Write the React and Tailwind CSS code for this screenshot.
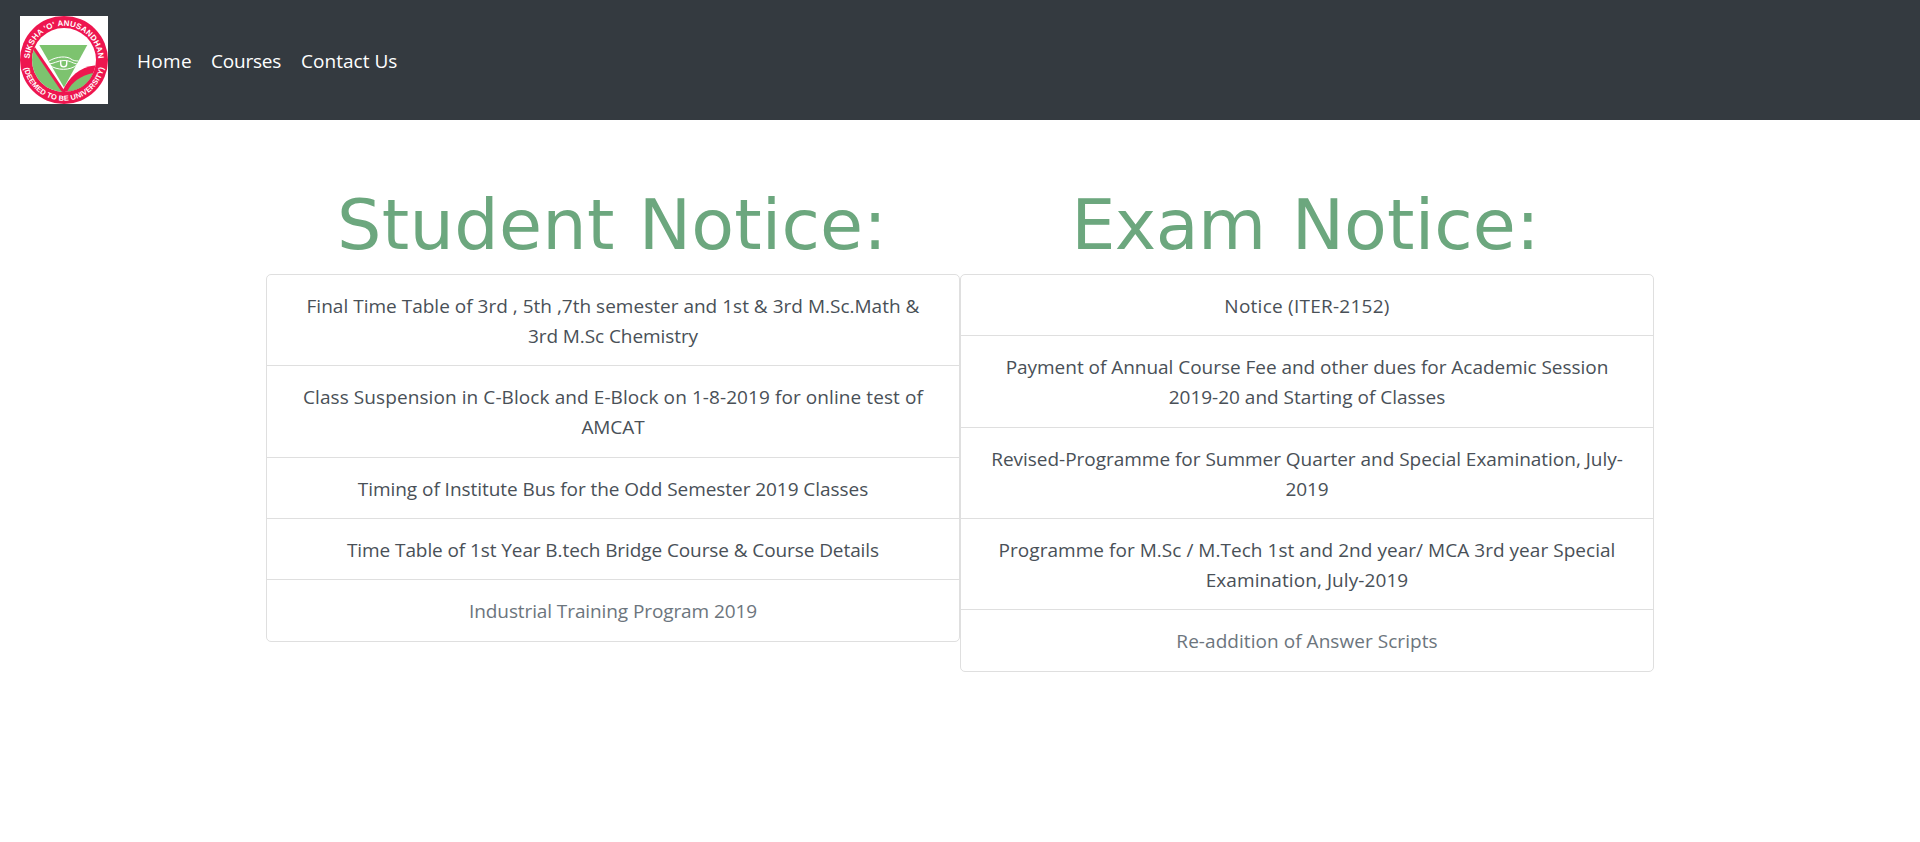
const studentNotices = [
  {
    height: "h-[91px]",
    lines: [
      ["Final Time Table of 3rd , 5th ,7th semester and 1st & 3rd M.Sc.Math &", "tracking-[0.01px]"],
      ["3rd M.Sc Chemistry", "tracking-[-0.08px]"],
    ],
  },
  {
    height: "h-[92px]",
    lines: [
      ["Class Suspension in C-Block and E-Block on 1-8-2019 for online test of", "tracking-[0.084px]"],
      ["AMCAT", "tracking-[-0.07px]"],
    ],
  },
  { height: "h-[61px]", lines: [["Timing of Institute Bus for the Odd Semester 2019 Classes", "tracking-[-0.05px]"]] },
  { height: "h-[61px]", lines: [["Time Table of 1st Year B.tech Bridge Course & Course Details", "tracking-[-0.09px]"]] },
  { height: "h-[61px]", muted: true, lines: [["Industrial Training Program 2019", "tracking-[-0.1px]"]] },
];

const examNotices = [
  { height: "h-[61px]", lines: [["Notice (ITER-2152)", "tracking-[0.245px]"]] },
  {
    height: "h-[92px]",
    lines: [
      ["Payment of Annual Course Fee and other dues for Academic Session", "tracking-[-0.03px]"],
      ["2019-20 and Starting of Classes", "tracking-[-0.01px]"],
    ],
  },
  {
    height: "h-[91px]",
    lines: [
      ["Revised-Programme for Summer Quarter and Special Examination, July-", "tracking-[-0.026px]"],
      ["2019", "tracking-[-0.06px]"],
    ],
  },
  {
    height: "h-[91px]",
    lines: [
      ["Programme for M.Sc / M.Tech 1st and 2nd year/ MCA 3rd year Special", "tracking-[0.037px]"],
      ["Examination, July-2019", "tracking-[0.084px]"],
    ],
  },
  { height: "h-[61px]", muted: true, lines: [["Re-addition of Answer Scripts", "tracking-[0.05px]"]] },
];

function Logo() {
  return (
    <svg viewBox="0 0 88 88" className="size-[88px] bg-white" role="img">
      <defs>
        <path id="arc-top" d="M9.5 44.4 A34.5 34.5 0 0 1 78.5 44.4" />
        <path id="arc-bottom" d="M3.9 51.5 A40.8 40.8 0 0 0 84.1 51.5" />
        <clipPath id="disc">
          <circle cx="44" cy="44" r="32" />
        </clipPath>
      </defs>
      <circle cx="44" cy="44" r="44" fill="#ee164f" />
      <circle cx="44" cy="44" r="32" fill="#fff" />
      <g clipPath="url(#disc)">
        <path d="M10 26 L14.5 32 L44 76 V80 H6 Z" fill="#7dc36f" />
        <path d="M13.5 31.5 L44 76.5" stroke="#ee164f" strokeWidth="3" />
        <path d="M43 74 C49 61 60 50 78 49 V80 H42 Z" fill="#ee164f" />
      </g>
      <path d="M47.5 75 C52 66 60 60 73 57 C69 67 60 75 47.5 75 Z" fill="#7dc36f" />
      <path d="M19.3 29 H67.3 L44 71.5 Z" fill="#7dc36f" />
      <g fill="none" stroke="#fff" strokeLinecap="round">
        <path d="M29 45 C37 40 47 40 51 43 C53 44.5 55 45 58 45" strokeWidth="1" />
        <path d="M28.5 48 C34 48 37 44.5 44 44.5 C51 44.5 53 48 58 48" strokeWidth="1" />
        <path d="M30 49.5 C37 54.5 50 55 57 49" strokeWidth="1" />
        <path d="M40.7 45 V48 C40.7 51.8 46.7 51.8 46.7 48 V45" strokeWidth="1.4" />
      </g>
      <g fill="#fff" fontFamily="Liberation Sans, Arial, sans-serif" fontWeight="700">
        <text fontSize="8">
          <textPath href="#arc-top" startOffset="1.6" textLength="105">SIKSHA 'O' ANUSANDHAN</textPath>
        </text>
        <text fontSize="7.4">
          <textPath href="#arc-bottom" startOffset="0.5" textLength="112">(DEEMED TO BE UNIVERSITY)</textPath>
        </text>
      </g>
    </svg>
  );
}

function NoticeColumn({ title, titleClass, firstWordClass, notices }) {
  const [first, second] = title.split(" ");
  return (
    <section className="flex-1">
      <h1
        className={`h-[84px] text-center font-['DejaVu_Sans',sans-serif] text-[70px] leading-[70px] text-[#6ca77e] whitespace-nowrap ${titleClass}`}
      >
        <span className={firstWordClass}>{first}</span> <span className="tracking-[0.13px]">{second}</span>
      </h1>
      <ul className="rounded-[5px] border border-[#dfdfdf] bg-white">
        {notices.map(({ height, muted, lines }) => (
          <li
            key={lines[0][0]}
            className={`flex flex-col pt-4 text-center leading-[30px] whitespace-nowrap border-b border-[#dfdfdf] last:border-b-0 ${height} ${muted ? "text-[#6c757d]" : "text-[#495057]"}`}
          >
            {lines.map(([text, tracking]) => (
              <span key={text} className={tracking}>
                {text}
              </span>
            ))}
          </li>
        ))}
      </ul>
    </section>
  );
}

export default function App() {
  return (
    <div className="min-h-[842px] bg-white font-['Open_Sans',sans-serif] text-[19px]">
      <nav className="flex h-[120px] items-center bg-[#343a40] px-5 text-white">
        <Logo />
        <div className="ml-7 flex gap-5 pt-0.5 pl-px leading-[30px] whitespace-nowrap">
          <a className="w-[54px] tracking-[0.3px]">Home</a>
          <a className="w-[70px] tracking-[-0.2px]">Courses</a>
          <a className="tracking-[0.03px]">Contact Us</a>
        </div>
      </nav>
      <main className="mx-auto flex w-[1388px] items-start pt-[70px]">
        <NoticeColumn
          title="Student Notice:"
          titleClass="pr-0.5 [word-spacing:1.9px]"
          firstWordClass="tracking-[0.3px]"
          notices={studentNotices}
        />
        <NoticeColumn
          title="Exam Notice:"
          titleClass="pr-[3px] [word-spacing:3.8px]"
          firstWordClass="tracking-[-0.6px]"
          notices={examNotices}
        />
      </main>
    </div>
  );
}
